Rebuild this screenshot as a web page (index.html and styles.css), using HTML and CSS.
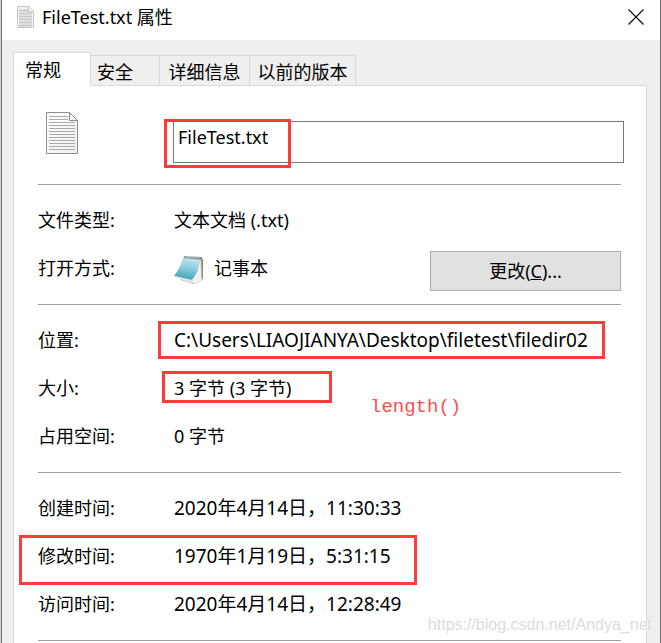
FILE: index.html
```html
<!DOCTYPE html>
<html lang="zh-CN">
<head>
<meta charset="utf-8">
<title>FileTest.txt 属性</title>
<link rel="stylesheet" href="styles.css">
</head>
<body>
<main class="window">
  <header class="titlebar">
    <svg class="title-icon" width="17" height="22" viewBox="0 0 17 22" aria-hidden="true">
      <path d="M.5.5h11l5 5v16H.5z" fill="#f4f4f4" stroke="#c4c4c4"/>
      <path d="M2 4.500h9M2 7.500h13M2 10.500h13M2 13.500h13M2 16.500h13M2 19.500h13" stroke="#c6caca" stroke-width="2"/>
      <path d="M11.500.5v5h5z" fill="#fff" stroke="#c4c4c4"/>
    </svg>
    <h1 class="title">FileTest.txt 属性</h1>
    <button class="close" type="button" aria-label="关闭">
      <svg width="16" height="16" viewBox="0 0 16 16" aria-hidden="true"><path d="M.5.5l15 15M15.500.5l-15 15" stroke="#000" stroke-width="1.100"/></svg>
    </button>
  </header>

  <div class="tabs" role="tablist">
    <button class="tab tab-active" type="button" role="tab" aria-selected="true">常规</button>
    <button class="tab tab-security" type="button" role="tab" aria-selected="false">安全</button>
    <button class="tab tab-details" type="button" role="tab" aria-selected="false">详细信息</button>
    <button class="tab tab-versions" type="button" role="tab" aria-selected="false">以前的版本</button>
  </div>

  <section class="panel" role="tabpanel">
    <div class="file">
      <svg class="file-icon" width="32" height="42" viewBox="0 0 32 42" aria-hidden="true">
        <defs><linearGradient id="paper" x2="1" y2="1"><stop offset="0" stop-color="#fff"/><stop offset="1" stop-color="#eee"/></linearGradient></defs>
        <path d="M.5.5h23l8 8v33H.5z" fill="url(#paper)" stroke="#8e8e8e"/>
        <path d="M3 4.500h19M3 7.500h19M3 10.500h26M3 13.500h26M3 16.500h26M3 19.500h26M3 22.500h26M3 25.500h26M3 28.500h26M3 31.500h26M3 34.500h26M3 37.500h26" stroke="#aaa"/>
        <path d="M23.500.5v8h8z" fill="#f0f0f0" stroke="#8e8e8e"/>
      </svg>
      <div class="name-field">
        <input class="name-input" type="text" value="FileTest.txt" aria-label="文件名">
        <span class="mark mark-name"></span>
      </div>
    </div>

    <dl class="group">
      <div class="row"><dt>文件类型:</dt><dd>文本文档 (.txt)</dd></div>
      <div class="row">
        <dt>打开方式:</dt>
        <dd class="opener">
          <svg width="32" height="32" viewBox="0 0 32 32" aria-hidden="true">
            <defs><linearGradient id="pad" x1=".6" y1="0" x2=".4" y2="1"><stop offset="0" stop-color="#c3e8f0"/><stop offset=".5" stop-color="#84c9d9"/><stop offset="1" stop-color="#3f9fb4"/></linearGradient></defs>
            <path d="M25 6l4 1v20l-5 2z" fill="#a3834f"/>
            <path d="M11 5l16 1 1 22-7 4-14-4z" fill="#dce6e9" stroke="#9caeb3" stroke-width=".5"/>
            <path d="M9 6l17 2c-1 9-4 15-8 20L0 24C4 19 7 12 9 6z" fill="url(#pad)"/>
            <path d="M0 24l18 4v1L1 25z" fill="#d4e6ea"/>
            <path d="M18 28c5-5 7-11 8-19l1 19-6 4z" fill="#eef4f5"/>
            <path d="M11 4l17 1v3L9 6z" fill="#849499"/>
            <path d="M13 4v2m2-2v2m2-2v2m2-2v2m2-2v2m2-2v2m2-2v2" stroke="#d9e0e2" stroke-width=".8"/>
          </svg>
          <span>记事本</span>
        </dd>
        <button class="change" type="button" accesskey="c">更改(<u>C</u>)...</button>
      </div>
    </dl>

    <dl class="group">
      <div class="row"><dt>位置:</dt><dd class="long">C:\Users\LIAOJIANYA\Desktop\filetest\filedir02</dd><span class="mark mark-path"></span></div>
      <div class="row"><dt>大小:</dt><dd>3 字节 (3 字节)</dd><span class="mark mark-size"></span><span class="note">length()</span></div>
      <div class="row"><dt>占用空间:</dt><dd>0 字节</dd></div>
    </dl>

    <dl class="group">
      <div class="row"><dt>创建时间:</dt><dd class="long">2020年4月14日，11:30:33</dd></div>
      <div class="row"><dt>修改时间:</dt><dd class="long">1970年1月19日，5:31:15</dd><span class="mark mark-modified"></span></div>
      <div class="row"><dt>访问时间:</dt><dd class="long">2020年4月14日，12:28:49</dd></div>
    </dl>
    <div class="group"></div>
  </section>
  <span class="watermark">https://blog.csdn.net/Andya_net</span>
</main>
</body>
</html>
```
FILE: styles.css
```css
* { box-sizing: border-box; }

body {
  margin: 0;
  background: #d4d4d4;
  color: #000;
  font: 18px/24px "Noto Sans", "Noto Sans CJK SC", sans-serif;
}

button, input { font: inherit; color: inherit; }

.window {
  position: relative;
  display: flex;
  flex-direction: column;
  height: 100vh;
  margin-left: 1px;
  overflow: hidden;
  background: #efefef;
  border: solid #707070;
  border-width: 0 1px;
}

.titlebar {
  display: flex;
  flex: none;
  align-items: center;
  height: 40px;
  padding: 0 16px 6px 15px;
  background: #fff;
}

.title {
  flex: 1;
  margin: 0 0 0 8px;
  font-size: 18px;
  font-weight: 400;
}

.close {
  display: flex;
  padding: 0;
  background: none;
  border: 0;
}

.tabs {
  position: relative;
  z-index: 1;
  display: flex;
  flex: none;
  align-items: flex-end;
  margin: 12px 11px -1px;
}

.tab {
  height: 31px;
  padding: 3px 0 0;
  background: #efefef;
  border: 1px solid #d9d9d9;
  border-left: 0;
  white-space: nowrap;
}

.tab-active {
  width: 78px;
  height: 34px;
  padding: 1px 18px 0 0;
  background: #fff;
  border-left: 1px solid #d9d9d9;
  border-bottom-color: #fff;
}

.tab-security { width: 69px; padding-right: 20px; }
.tab-details { width: 90px; }
.tab-versions { width: 106px; }

.panel {
  flex: none;
  margin: 0 13px 0 11px;
  padding: 0 25px 0 24px;
  background: #fff;
  border: 1px solid #d9d9d9;
}

.file {
  display: flex;
  align-items: flex-start;
  height: 98px;
  padding: 26px 0 0 8px;
}

.name-field {
  position: relative;
  flex: 1;
  margin: 9px -3px 0 95px;
}

.name-input {
  display: block;
  width: 100%;
  height: 42px;
  padding: 0 4px 10px;
  background: #fff;
  border: 1px solid #7a7a7a;
  border-radius: 0;
}

.group {
  margin: 0;
  padding: 12px 0 11px;
  border-top: 1px solid #a0a0a0;
}

.row {
  position: relative;
  display: flex;
  align-items: center;
  height: 48px;
  padding-bottom: 2px;
}

.row dt { flex: none; width: 136px; }
.row dd { flex: 1; margin: 0; white-space: nowrap; }
.row .long { font-size: 19px; }

.opener {
  display: flex;
  align-items: center;
  gap: 8px;
}

.change {
  width: 191px;
  height: 40px;
  margin-top: 6px;
  padding: 0;
  background: #e1e1e1;
  border: 1px solid #adadad;
}

.mark {
  position: absolute;
  border: 3px solid #fc3b3b;
  pointer-events: none;
}

.mark-name { left: -9px; top: -2px; width: 127px; height: 49px; }
.mark-path { left: 120px; top: 4px; width: 447px; height: 38px; }
.mark-size { left: 124px; top: 6px; width: 170px; height: 32px; }
.mark-modified { left: -19px; top: 2px; width: 398px; height: 50px; }

.note {
  position: absolute;
  left: 332px;
  top: 30px;
  color: #ff4d4d;
  font: 19px/24px "Liberation Mono", monospace;
}

.watermark {
  position: absolute;
  right: 8px;
  bottom: 6px;
  color: #dcdcdc;
  font: 16px/24px "Liberation Sans", sans-serif;
  text-shadow: 1px 1px 1px #fff;
}
```
